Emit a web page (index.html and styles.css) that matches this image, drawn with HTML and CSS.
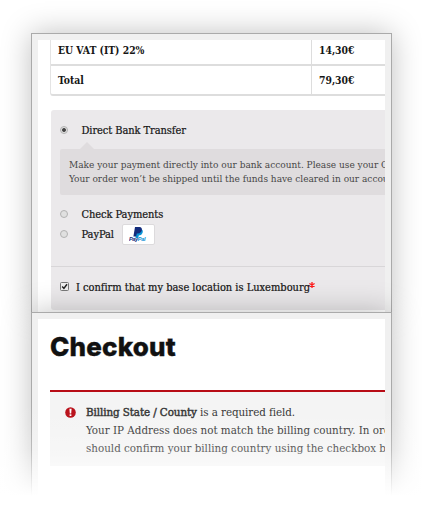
FILE: index.html
```html
<!DOCTYPE html>
<html lang="en">
<head>
<meta charset="utf-8">
<title>Checkout</title>
<link rel="stylesheet" href="styles.css">
</head>
<body>
<main class="stage">
  <section class="card card-payment">
    <div class="view">
      <div class="totals">
        <div class="row first"><span class="name"><b>EU VAT (IT) 22%</b></span><span class="value"><b>14,30€</b></span></div>
        <div class="row"><span class="name"><b>Total</b></span><span class="value"><b>79,30€</b></span></div>
      </div>
      <div class="payment">
        <div class="option bank"><i class="radio on"></i><b>Direct Bank Transfer</b></div>
        <div class="note">
          <div>Make your payment directly into our bank account. Please use your Order ID</div>
          <div>Your order won’t be shipped until the funds have cleared in our account.</div>
        </div>
        <div class="option check"><i class="radio"></i><b>Check Payments</b></div>
        <div class="option paypal"><i class="radio"></i><b>PayPal</b>
          <span class="badge">
            <svg width="18" height="17" viewBox="0 0 18 17">
              <path d="M7.5 3H12.2Q14.5 4 13.5 7Q12.5 9.5 9.8 9.5L9.2 12H6.5Z" fill="#0a94d6"/>
              <path d="M6 1H10.5Q13.4 1.4 12.8 4.3Q12.2 7.4 8.8 7.4H7.8L7.1 10.5H4.4Z" fill="#142c7c"/>
              <text x="0" y="15.3" textLength="16.5" class="logo-text"><tspan fill="#142c7c">Pay</tspan><tspan fill="#0a94d6">Pal</tspan></text>
            </svg>
          </span>
        </div>
        <div class="confirm">
          <svg class="checkbox" width="9" height="9" viewBox="0 0 9 9"><rect x=".5" y=".5" width="8" height="8" rx="1" fill="#eee" stroke="#777"/><path d="M2.2 4.6L3.9 6.4L7 2.2" fill="none" stroke="#222" stroke-width="1.5"/></svg>
          <b>I confirm that my base location is Luxembourg</b>
          <svg class="star" width="6" height="6" viewBox="0 0 6 6"><path d="M3 0V6M.4 1.5L5.6 4.5M5.6 1.5L.4 4.5" stroke="#ff1a1a" stroke-width="1.3"/></svg>
        </div>
      </div>
    </div>
  </section>
  <section class="card card-checkout">
    <div class="view">
      <h1>Checkout</h1>
      <div class="error">
        <svg class="alert" width="11" height="11" viewBox="0 0 11 11"><circle cx="5.5" cy="5.5" r="5.3" fill="#b80c16"/><path d="M4.4 1.8H6.6L6.2 6.4H4.8Z" fill="#fff"/><rect x="4.6" y="7.3" width="1.8" height="1.7" fill="#fff"/></svg>
        <div class="messages">
          <div class="required"><b class="field">Billing State / County</b> is a required field.</div>
          <div>Your IP Address does not match the billing country. In order</div>
          <div>should confirm your billing country using the checkbox below</div>
        </div>
      </div>
    </div>
  </section>
  <div class="fade"></div>
</main>
</body>
</html>
```
FILE: styles.css
```css
* { box-sizing: border-box; }
body { margin: 0; background: #fff; overflow: hidden; }
.stage {
  position: relative;
  width: 422px;
  height: 507px;
  overflow: hidden;
  padding: 33px 30px 0 31px;
  font-family: "DejaVu Serif Condensed", "DejaVu Serif", serif;
  font-stretch: condensed;
  font-size: 10px;
  color: #151515;
}
.card {
  border: 1px solid #aaa;
  background: #f0f0f0;
  padding: 6px;
  box-shadow: 0 0 28px rgba(0, 0, 0, .25);
}
.card-payment { height: 279px; border-bottom: 0; padding-bottom: 0; }
.card-checkout { position: relative; height: 230px; }
.view { height: 100%; background: #fff; overflow: hidden; white-space: nowrap; padding-left: 13px; }
.totals { border: 1px solid #e4e4e4; border-width: 0 0 2px 1px; border-bottom-color: #ddd; border-radius: 0 0 0 3px; margin-left: -1px; }
.row { display: flex; height: 28px; line-height: 28px; font-size: 10.3px; }
.row.first { height: 26px; line-height: 21px; border-bottom: 2px solid #ddd; }
.name { width: 261px; padding-left: 7px; border-right: 1px solid #ddd; }
.value { padding-left: 7px; }
.payment { margin-top: 14px; height: 200px; background: #ebe9eb; border-radius: 3px 0 0 3px; padding-top: 10px; }
.option { display: flex; align-items: center; height: 20px; padding-left: 9px; }
.option b { margin: 0 0 0 13.5px; letter-spacing: -.08px; }
.radio { flex: none; width: 8px; height: 8px; margin-top: -1px; border: 1px solid #b2b2b2; border-radius: 50%; background: #e0e0e0; }
.radio.on { background: radial-gradient(circle, #444 0 1.5px, #e0e0e0 2.3px); }
.note { position: relative; margin: 9px 0 9px 9px; height: 46px; padding: 9px 9px; background: #dfdcde; line-height: 14px; color: #474747; border-radius: 2px 0 0 2px; }
.note::before { content: ""; position: absolute; left: 20px; top: -7px; border: 7px solid transparent; border-top: 0; border-bottom-color: #dfdcde; }
.badge { display: flex; justify-content: center; align-items: center; width: 33px; height: 21px; margin-left: 8px; background: #fff; border: 1px solid #dcdadc; border-radius: 2px; }
.logo-text { font: italic bold 5.6px "Liberation Sans", sans-serif; }
.confirm { display: flex; align-items: center; margin-top: 22px; height: 40px; border-top: 1px solid #d8d6d8; padding-left: 9px; }
.confirm b { margin: 1px 0 0 7px; letter-spacing: -.02px; }
.star { margin: -3px 0 0 -.5px; }
b { font-size: 11px; font-weight: normal; -webkit-text-stroke: .2px currentColor; }
.row b { font-size: inherit; font-weight: bold; -webkit-text-stroke: 0; }
.card-checkout .view { padding-left: 12px; }
h1 { margin: 0; height: 71px; padding-top: 12px; font: 800 26px/32px Inter, sans-serif; letter-spacing: .2px; -webkit-text-stroke: .4px #111; color: #111; }
.error { display: flex; height: 76px; background: #f4f4f4; border-top: 2px solid #b80c16; padding: 11px 0 0 15px; color: #333; font-size: 11.5px; line-height: 18px; }
.required { letter-spacing: -.08px; }
.error .field { font-size: inherit; -webkit-text-stroke-width: .45px; }
.alert { flex: none; margin: 4px 10px 0 0; }
.fade { position: absolute; inset: 400px 0 0; background: linear-gradient(rgba(255,255,255,0), rgba(255,255,255,.06) 25px, rgba(255,255,255,.22) 50px, rgba(255,255,255,.55) 70px, #fff 96px); }
```
